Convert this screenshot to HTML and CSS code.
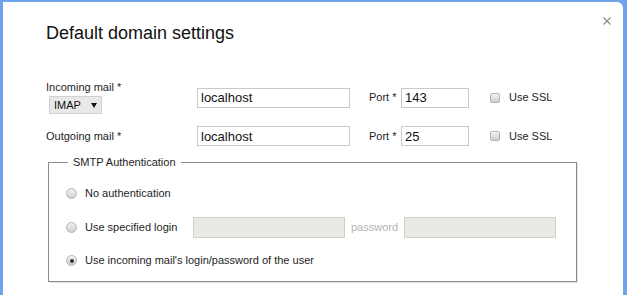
FILE: index.html
```html
<!DOCTYPE html>
<html lang="en">

<head>
    <meta charset="UTF-8">
    <meta name="viewport" content="width=device-width, initial-scale=1.0">
    <title>Default domain settings</title>
    <link rel="stylesheet" href="styles.css">
</head>

<body>

    <div class="dialog">
        <button class="close-button" type="button" aria-label="Close">
            <svg width="8" height="8" viewBox="0 0 8 8">
                <path d="M0.5 0.5 L7.5 7.5 M7.5 0.5 L0.5 7.5" stroke="#8a8a8a" stroke-width="1.1" fill="none" />
            </svg>
        </button>

        <h2 class="dialog-title">Default domain settings</h2>

        <div class="mail-row mail-row-first">
            <div class="mail-label">
                <label>Incoming mail *</label>
                <button class="mail-type" type="button">IMAP <span class="caret"></span></button>
            </div>
            <input class="host-input" type="text" value="localhost">
            <label class="port-label">Port *</label>
            <input class="port-input" type="text" value="143">
            <label class="ssl"><input type="checkbox"> Use SSL</label>
        </div>

        <div class="mail-row">
            <div class="mail-label">
                <label>Outgoing mail *</label>
            </div>
            <input class="host-input" type="text" value="localhost">
            <label class="port-label">Port *</label>
            <input class="port-input" type="text" value="25">
            <label class="ssl"><input type="checkbox"> Use SSL</label>
        </div>

        <fieldset class="smtp-auth">
            <legend>SMTP Authentication</legend>

            <div class="auth-row">
                <input type="radio" name="auth">
                <span class="auth-text">No authentication</span>
            </div>

            <div class="auth-row">
                <input type="radio" name="auth">
                <span class="auth-text auth-text-fixed">Use specified login</span>
                <input class="login-input" type="text" disabled>
                <span class="password-label">password</span>
                <input class="login-input" type="password" disabled>
            </div>

            <div class="auth-row">
                <input type="radio" name="auth" checked>
                <span class="auth-text">Use incoming mail's login/password of the user</span>
            </div>
        </fieldset>
    </div>

</body>

</html>
```

FILE: styles.css
```css
html,
body {
    margin: 0;
    height: 295px;
    overflow: hidden;
}

body {
    background: #6fa4ea;
    font-family: "Liberation Sans", Arial, sans-serif;
    font-size: 11px;
    line-height: 13px;
    color: #1e1e1e;
}

.dialog {
    position: relative;
    box-sizing: border-box;
    height: 293px;
    margin: 2px 4px 0 3px;
    padding: 21px 0 0 42px;
    background: #fff;
    border-top-right-radius: 6px;
}

.close-button {
    position: absolute;
    top: 15px;
    right: 12px;
    padding: 0;
    border: none;
    background: none;
    width: 8px;
    height: 8px;
    display: flex;
}

.dialog-title {
    margin: 0 0 0 1px;
    font-size: 18px;
    line-height: 21px;
    font-weight: normal;
    color: #111;
}

.mail-row {
    display: flex;
    align-items: center;
    margin-top: 12px;
}

.mail-row-first {
    margin-top: 37px;
}

.mail-label {
    width: 152px;
    display: flex;
    flex-direction: column;
    align-items: flex-start;
    padding-left: 1px;
    box-sizing: border-box;
}

.mail-type {
    margin: 2px 0 0 3px;
    box-sizing: border-box;
    width: 53px;
    height: 18px;
    padding: 0 0 0 4px;
    border: 1px solid #d2d2d2;
    background: #e8e8e8;
    font-family: inherit;
    font-size: 11px;
    color: #111;
    display: flex;
    align-items: center;
}

.caret {
    width: 0;
    height: 0;
    margin-left: 10px;
    border-left: 3px solid transparent;
    border-right: 3px solid transparent;
    border-top: 5px solid #111;
}

.host-input,
.port-input,
.login-input {
    box-sizing: border-box;
    height: 20px;
    margin: 0;
    padding: 0 3px;
    border: 1px solid #c9c9c9;
    font-family: inherit;
    font-size: 13px;
    color: #111;
    background: #fff;
    outline: none;
}

.host-input {
    width: 153px;
}

.port-label {
    margin-left: 19px;
    width: 32px;
}

.port-input {
    width: 68px;
}

.ssl {
    margin-left: 21px;
    display: flex;
    align-items: center;
}

.ssl input,
.auth-row input[type="radio"] {
    appearance: none;
    margin: 0;
    border: 1px solid #b4b4b4;
    background: linear-gradient(#f2f2f2, #cfcfcf);
    box-sizing: border-box;
}

.ssl input {
    width: 10px;
    height: 10px;
    border-radius: 2px;
    margin-right: 9px;
}

.smtp-auth {
    margin: 10px 0 0 3px;
    width: 529px;
    box-sizing: border-box;
    padding: 14px 0 10px 17px;
    border: 1px solid #8c8c8c;
    box-shadow: 1px 1px 0 #e4e4e4;
}

.smtp-auth legend {
    margin-left: 2px;
    padding: 0 5px;
    line-height: 13px;
}

.auth-row {
    display: flex;
    align-items: center;
    height: 21px;
    margin-top: 13px;
}

.auth-row:first-of-type {
    margin-top: 0;
}

.auth-row:last-child {
    margin-top: 12px;
}

.auth-row input[type="radio"] {
    width: 11px;
    height: 11px;
    border-radius: 50%;
    margin-right: 8px;
    display: flex;
    align-items: center;
    justify-content: center;
}

.auth-row input[type="radio"]:checked::after {
    content: "";
    width: 4px;
    height: 4px;
    border-radius: 50%;
    background: #333;
}

.auth-text-fixed {
    width: 108px;
}

.login-input {
    width: 152px;
    height: 21px;
    background: #eae9e4;
    border-color: #d0d0cc;
}

.password-label {
    color: #b3b3b3;
    margin: 0 6px 0 6px;
}
```
